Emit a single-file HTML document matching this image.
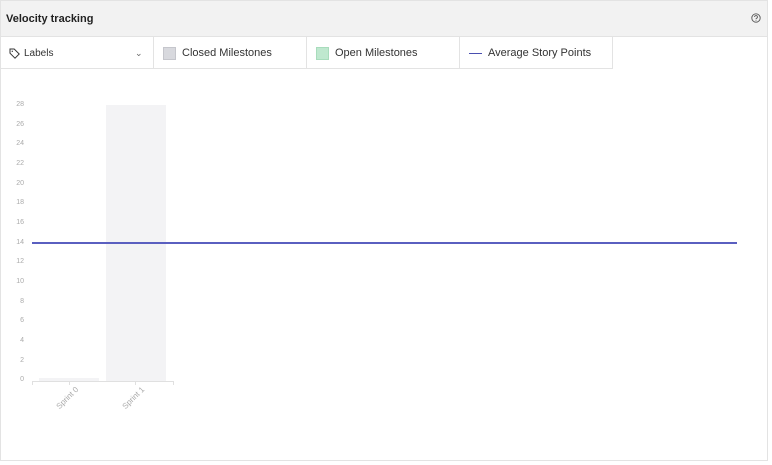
<!DOCTYPE html>
<html><head><style>
body{margin:0;background:#fff;font-family:"Liberation Sans",sans-serif;width:772px;height:465px;overflow:hidden;position:relative}
.panel{position:absolute;left:0;top:0;width:766px;height:459px;border:1px solid #e3e3e3;}
.hdr{position:absolute;left:0;top:0;width:766px;height:35px;background:#f2f2f2;border-bottom:1px solid #e3e3e3}
.hdr b{position:absolute;left:5px;top:12px;font-size:11px;color:#222}
.cell{position:absolute;top:36px;height:31px;border-right:1px solid #e3e3e3;border-bottom:1px solid #e3e3e3;font-size:11px;color:#333;line-height:33px}
.sw{position:absolute;top:10px;width:12px;height:12px}
.yl{position:absolute;left:12px;width:12px;text-align:right;font-size:7px;color:#aaa}
.xl{position:absolute;font-size:8px;color:#aaa;transform:rotate(-45deg);transform-origin:right top;width:32px;text-align:right}
</style></head><body>
<div class="panel">
<div class="hdr"><b>Velocity tracking</b>
<svg style="position:absolute;left:750px;top:12px" width="10" height="10" viewBox="0 0 10 10"><circle cx="5" cy="5" r="4.2" fill="none" stroke="#555" stroke-width="0.9"/><path d="M3.6 4a1.4 1.4 0 1 1 1.9 1.3c-.4.2-.5.4-.5.8" fill="none" stroke="#555" stroke-width="0.9"/><circle cx="5" cy="7.3" r="0.5" fill="#555"/></svg></div>
<div class="cell" style="left:0;width:152px">
<svg style="position:absolute;left:8px;top:11px" width="11" height="11" viewBox="0 0 11 11"><path d="M1 1h4.2l5 5-4.2 4.2-5-5z" fill="none" stroke="#333" stroke-width="1"/><circle cx="3.3" cy="3.3" r="0.7" fill="#333"/></svg>
<span style="position:absolute;left:23px;font-size:10px">Labels</span><span style="position:absolute;left:134px;font-size:9px;color:#666">⌄</span></div>
<div class="cell" style="left:153px;width:152px"><div class="sw" style="left:9px;background:#d8d9de;border:1px solid #c5c6cc;width:11px;height:11px"></div><span style="position:absolute;left:28px">Closed Milestones</span></div>
<div class="cell" style="left:306px;width:152px"><div class="sw" style="left:9px;background:#bfe8cf;border:1px solid #a8dcbc;width:11px;height:11px"></div><span style="position:absolute;left:28px">Open Milestones</span></div>
<div class="cell" style="left:459px;width:152px"><div style="position:absolute;left:9px;top:16px;width:13px;height:1px;background:#4a4fb0"></div><span style="position:absolute;left:28px">Average Story Points</span></div>
</div>
<div style="position:absolute;left:106px;top:105px;width:60px;height:276px;background:#f3f3f5"></div>
<div style="position:absolute;left:39px;top:378px;width:60px;height:3px;background:#f3f3f5"></div>
<div style="position:absolute;left:32px;top:381px;width:141px;height:1px;background:#e0e0e0"></div>
<div style="position:absolute;left:32px;top:381px;width:1px;height:4px;background:#e0e0e0"></div>
<div style="position:absolute;left:69px;top:381px;width:1px;height:4px;background:#e0e0e0"></div>
<div style="position:absolute;left:135px;top:381px;width:1px;height:4px;background:#e0e0e0"></div>
<div style="position:absolute;left:173px;top:381px;width:1px;height:4px;background:#e0e0e0"></div>
<div style="position:absolute;left:32px;top:242px;width:705px;height:2px;background:#5a5fc0"></div>
<div class="yl" style="top:101px">28</div><div class="yl" style="top:121px">26</div><div class="yl" style="top:140px">24</div><div class="yl" style="top:160px">22</div><div class="yl" style="top:180px">20</div><div class="yl" style="top:199px">18</div><div class="yl" style="top:219px">16</div><div class="yl" style="top:239px">14</div><div class="yl" style="top:258px">12</div><div class="yl" style="top:278px">10</div><div class="yl" style="top:298px">8</div><div class="yl" style="top:317px">6</div><div class="yl" style="top:337px">4</div><div class="yl" style="top:357px">2</div><div class="yl" style="top:376px">0</div>
<div class="xl" style="left:42px;top:385px">Sprint 0</div>
<div class="xl" style="left:108px;top:385px">Sprint 1</div>
</body></html>
